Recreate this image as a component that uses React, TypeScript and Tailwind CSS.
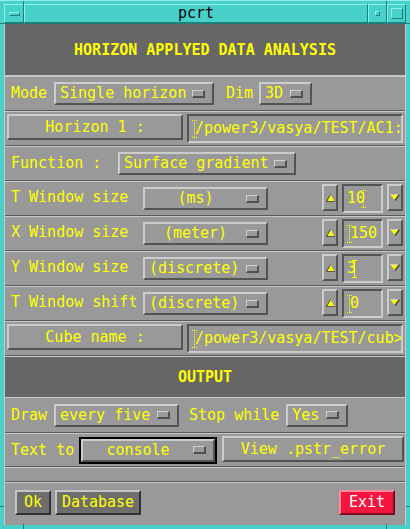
import React from 'react'

const raised = 'border-2 border-t-[#cccccc] border-l-[#cccccc] border-r-[#545454] border-b-[#545454]'
const sunken = 'border-2 border-t-[#545454] border-l-[#545454] border-r-[#cccccc] border-b-[#cccccc]'

function Indicator() {
  return (
    <div className="w-[13px] h-[8px] shrink-0 border-t border-l border-b-2 border-r-2 border-t-[#d0d0d0] border-l-[#d0d0d0] border-b-[#505050] border-r-[#505050] bg-[#9a9a9a]" />
  )
}

function OptionMenu({ label, width, center = false }: { label: string; width: string; center?: boolean }) {
  return (
    <div className={`flex items-center h-[23px] bg-[#999999] ${raised} ${width}`}>
      <span className={`flex-1 whitespace-pre text-[#ffff00] ${center ? 'text-center' : 'pl-[4px]'}`}>{label}</span>
      <div className="mr-[7px]">
        <Indicator />
      </div>
    </div>
  )
}

function Cursor({ solid = false }: { solid?: boolean }) {
  return (
    <svg width="5" height="18" viewBox="0 0 5 18" className="shrink-0">
      <line x1="0" y1="0.5" x2="5" y2="0.5" stroke="#ffff00" strokeDasharray={solid ? undefined : '1 1'} />
      <line x1="0" y1="17.5" x2="5" y2="17.5" stroke="#ffff00" strokeDasharray={solid ? undefined : '1 1'} />
      <line x1="2.5" y1="0" x2="2.5" y2="18" stroke="#ffff00" strokeDasharray={solid ? undefined : '1 1'} />
    </svg>
  )
}

function TextField({ value, width, cursor }: { value: string; width: string; cursor: 'before' | 'after' | 'solid' }) {
  return (
    <div className={`flex items-center h-[29px] overflow-hidden bg-[#999999] ${sunken} ${width} pl-[3px]`}>
      {cursor === 'before' && <div className="-mr-[2px]"><Cursor /></div>}
      <span className="whitespace-pre text-[#ffff00]">{value}</span>
      {cursor === 'after' && <div className="-ml-[4px]"><Cursor /></div>}
      {cursor === 'solid' && <div className="-ml-[4px]"><Cursor solid /></div>}
    </div>
  )
}

function SpinButton({ dir }: { dir: 'up' | 'down' }) {
  return (
    <div className={`flex items-center justify-center w-[16px] h-[27px] bg-[#999999] ${raised}`}>
      {dir === 'up' ? (
        <svg width="9" height="8" viewBox="0 0 9 8">
          <polygon points="4.5,0.5 8.5,7.5 0.5,7.5" fill="#ffff00" />
          <polyline points="0.5,7.5 4.5,0.5" fill="none" stroke="#444444" />
          <line x1="0" y1="7.5" x2="9" y2="7.5" stroke="#555555" />
        </svg>
      ) : (
        <svg width="10" height="7" viewBox="0 0 10 7">
          <polygon points="0.5,0.5 9.5,0.5 5,6.5" fill="#ffff00" />
          <line x1="0" y1="0.5" x2="10" y2="0.5" stroke="#cccccc" />
          <polyline points="9.5,0.5 5,6.5" fill="none" stroke="#444444" strokeWidth="1.5" />
        </svg>
      )}
    </div>
  )
}

function PushButton({ label, width, height = 'h-[26px]' }: { label: string; width: string; height?: string }) {
  return (
    <div className={`flex items-center justify-center bg-[#999999] ${raised} ${width} ${height}`}>
      <span className="whitespace-pre text-[#ffff00]">{label}</span>
    </div>
  )
}

function Sep() {
  return (
    <div className="h-[2px] shrink-0 flex flex-col">
      <div className="h-px bg-[#5a5a5a]" />
      <div className="h-px bg-[#c8c8c8]" />
    </div>
  )
}

function WindowRow({ label, unit, value, cursor, center }: { label: string; unit: string; value: string; cursor: 'before' | 'after' | 'solid'; center: boolean }) {
  return (
    <div className="h-[33px] flex items-start pt-[2px]">
      <span className="w-[138px] pl-[6px] mt-[6px] whitespace-pre text-[#ffff00]">{label}</span>
      <div className="mt-[3px]">
        <OptionMenu label={unit} width="w-[125px]" center={center} />
      </div>
      <div className="ml-[54px]">
        <SpinButton dir="up" />
      </div>
      <div className="ml-[4px]">
        <TextField value={value} width="w-[41px]" cursor={cursor} />
      </div>
      <div className="ml-[4px]">
        <SpinButton dir="down" />
      </div>
    </div>
  )
}

export default function App() {
  return (
    <div
      className="relative w-[410px] h-[529px] bg-[#48d0cb] flex flex-col text-[15px] leading-none border-t border-t-[#8ff0ea]"
      style={{ fontFamily: '"DejaVu Sans Mono", "Liberation Mono", monospace' }}
    >
      {/* frame corner marks */}
      <div className="absolute left-[23px] top-0 w-px h-[4px] bg-[#1f7f7a]" />
      <div className="absolute right-[23px] top-0 w-px h-[4px] bg-[#1f7f7a]" />
      <div className="absolute left-0 top-[22px] w-[4px] h-px bg-[#1f7f7a]" />
      <div className="absolute right-0 top-[22px] w-[4px] h-px bg-[#1f7f7a]" />
      <div className="absolute left-0 bottom-[22px] w-[4px] h-px bg-[#1f7f7a]" />
      <div className="absolute right-0 bottom-[22px] w-[4px] h-px bg-[#1f7f7a]" />
      <div className="absolute left-[23px] bottom-0 w-px h-[5px] bg-[#1f7f7a]" />
      <div className="absolute right-[23px] bottom-0 w-px h-[5px] bg-[#1f7f7a]" />

      {/* title bar */}
      <div className="h-[22px] flex px-[4px] pt-[3px]">
        <div className="w-[20px] h-[19px] flex items-center justify-center border border-t-[#8ff0ea] border-l-[#8ff0ea] border-r-[#1f7f7a] border-b-[#1f7f7a]">
          <div className="w-[11px] h-[4px] border border-t-[#8ff0ea] border-l-[#8ff0ea] border-r-[#1f7f7a] border-b-[#1f7f7a]" />
        </div>
        <div className="flex-1 h-[19px] flex items-center justify-center border border-t-[#8ff0ea] border-l-[#8ff0ea] border-r-[#1f7f7a] border-b-[#1f7f7a]">
          <span className="text-black">pcrt</span>
        </div>
        <div className="w-[19px] h-[19px] flex items-center justify-center border border-t-[#8ff0ea] border-l-[#8ff0ea] border-r-[#1f7f7a] border-b-[#1f7f7a]">
          <div className="w-[5px] h-[5px] border border-t-[#8ff0ea] border-l-[#8ff0ea] border-r-[#1f7f7a] border-b-[#1f7f7a]" />
        </div>
        <div className="w-[19px] h-[19px] flex items-center justify-center border border-t-[#8ff0ea] border-l-[#8ff0ea] border-r-[#1f7f7a] border-b-[#1f7f7a]">
          <div className="w-[12px] h-[11px] border border-t-[#8ff0ea] border-l-[#8ff0ea] border-r-[#1f7f7a] border-b-[#1f7f7a]" />
        </div>
      </div>
      <div className="h-px mx-[4px] bg-[#1f7f7a]" />

      {/* content */}
      <div className="mx-[4px] h-[501px] bg-[#999999] flex flex-col border-l border-l-[#c8c8c8] border-r border-r-[#c8c8c8]">
        <div className="h-[51px] bg-[#666666] flex items-center justify-center pt-[2px]">
          <span className="font-bold text-[#ffff00]">HORIZON APPLYED DATA ANALYSIS</span>
        </div>
        <div className="h-[2px] bg-[#c8c8c8]" />

        {/* Mode */}
        <div className="h-[33px] flex items-center pl-[6px]">
          <span className="w-[36px] text-[#ffff00]">Mode</span>
          <div className="ml-[7px]">
            <OptionMenu label="Single horizon" width="w-[160px]" />
          </div>
          <span className="ml-[12px] text-[#ffff00]">Dim</span>
          <div className="ml-[6px]">
            <OptionMenu label="3D" width="w-[53px]" />
          </div>
        </div>
        <Sep />

        {/* Horizon */}
        <div className="h-[33px] flex items-start pt-[2px] pl-[2px] gap-[4px]">
          <PushButton label="Horizon 1 :" width="w-[176px]" />
          <TextField value="/power3/vasya/TEST/AC1:" width="w-[216px]" cursor="before" />
        </div>
        <Sep />

        {/* Function */}
        <div className="h-[33px] flex items-center pl-[6px]">
          <span className="w-[90px] whitespace-pre text-[#ffff00]">Function :</span>
          <div className="ml-[17px]">
            <OptionMenu label="Surface gradient" width="w-[178px]" />
          </div>
        </div>
        <Sep />

        <WindowRow label="T Window size" unit="(ms)" value="10" cursor="after" center />
        <Sep />
        <WindowRow label="X Window size" unit="(meter)" value="150" cursor="before" center />
        <Sep />
        <WindowRow label="Y Window size" unit="(discrete)" value="3" cursor="solid" center={false} />
        <Sep />
        <WindowRow label="T Window shift" unit="(discrete)" value="0" cursor="before" center={false} />
        <Sep />

        {/* Cube */}
        <div className="h-[33px] flex items-start pt-[2px] pl-[2px] gap-[4px]">
          <PushButton label="Cube name :" width="w-[176px]" />
          <TextField value="/power3/vasya/TEST/cub>" width="w-[216px]" cursor="before" />
        </div>
        <Sep />

        <div className="h-[40px] bg-[#666666] flex items-center justify-center">
          <span className="font-bold text-[#ffff00]">OUTPUT</span>
        </div>
        <div className="h-px bg-[#c8c8c8]" />

        {/* Draw */}
        <div className="h-[34px] flex items-center pl-[6px]">
          <span className="w-[36px] text-[#ffff00]">Draw</span>
          <div className="ml-[7px]">
            <OptionMenu label="every five" width="w-[125px]" />
          </div>
          <span className="ml-[10px] whitespace-pre text-[#ffff00]">Stop while</span>
          <div className="ml-[7px]">
            <OptionMenu label="Yes" width="w-[62px]" />
          </div>
        </div>
        <Sep />

        {/* Text to */}
        <div className="h-[32px] flex items-center pl-[6px]">
          <span className="w-[63px] whitespace-pre text-[#ffff00]">Text to</span>
          <div className="ml-[5px] border-2 border-black">
            <OptionMenu label="console" width="w-[134px]" center />
          </div>
          <div className="ml-[5px] -mt-[2px]">
            <PushButton label="View .pstr_error" width="w-[182px]" />
          </div>
        </div>
        <Sep />

        <div className="h-[13px]" />
        <Sep />

        {/* bottom buttons */}
        <div className="h-[42px] flex items-start justify-between pt-[7px] px-[10px]">
          <div className="flex gap-[4px]">
            <div className="w-[36px] h-[25px] flex items-center justify-center bg-[#6e6e6e] border-2 border-t-[#c4c4c4] border-l-[#c4c4c4] border-r-[#333333] border-b-[#333333]">
              <span className="text-[#ffff00]">Ok</span>
            </div>
            <div className="w-[86px] h-[25px] flex items-center justify-center bg-[#6e6e6e] border-2 border-t-[#c4c4c4] border-l-[#c4c4c4] border-r-[#333333] border-b-[#333333]">
              <span className="text-[#ffff00]">Database</span>
            </div>
          </div>
          <div className="w-[56px] h-[25px] flex items-center justify-center bg-[#f5163f] border-2 border-t-[#ff8aa0] border-l-[#ff8aa0] border-r-[#7a0a1e] border-b-[#7a0a1e]">
            <span className="text-white">Exit</span>
          </div>
        </div>
      </div>
    </div>
  )
}
